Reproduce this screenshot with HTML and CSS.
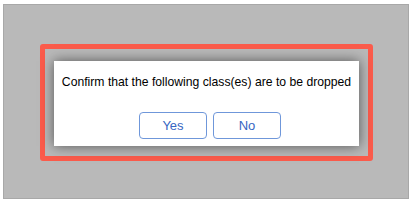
FILE: index.html
```html
<!DOCTYPE html>
<html lang="en">
<head>
    <meta charset="UTF-8">
    <title>Drop classes</title>
    <link rel="stylesheet" href="styles.css">
</head>
<body>
    <div class="backdrop">
        <!-- highlighted confirm dialog -->
        <div class="highlight">
            <div class="dialog">
                <p class="message">Confirm that the following class(es) are to be dropped</p>
                <div class="actions">
                    <button class="btn">Yes</button>
                    <button class="btn">No</button>
                </div>
            </div>
        </div>
    </div>
</body>
</html>
```

FILE: styles.css
```css
body {
    margin: 0;
    background: #fff;
    font-family: "Liberation Sans", Arial, sans-serif;
}
.backdrop {
    margin: 4px 0 0 3px;
    width: 406px;
    height: 195px;
    box-sizing: border-box;
    background: #b9b9b9;
    border: 1px solid #a8a8a8;
    padding: 39px 0 0 36px;
}
.highlight {
    width: 333px;
    box-sizing: border-box;
    border: 5px solid #fb5b4b;
    border-radius: 3px;
    padding: 12px 9px 10px 9px;
}
.dialog {
    width: 305px;
    height: 85px;
    box-sizing: border-box;
    background: #fff;
    box-shadow: 0 0 12px rgba(0, 0, 0, 0.55);
    padding-top: 13px;
}
.message {
    margin: 0;
    font-size: 12.2px;
    line-height: 16px;
    text-align: center;
    white-space: nowrap;
    color: #000;
}
.actions {
    display: flex;
    justify-content: center;
    gap: 6px;
    margin-top: 22px;
    padding-left: 7px;
}
.btn {
    width: 68px;
    height: 27px;
    background: #fff;
    border: 1px solid #6f97da;
    border-radius: 4px;
    color: #3766c2;
    font-family: inherit;
    font-size: 13px;
    padding: 0;
}
```
